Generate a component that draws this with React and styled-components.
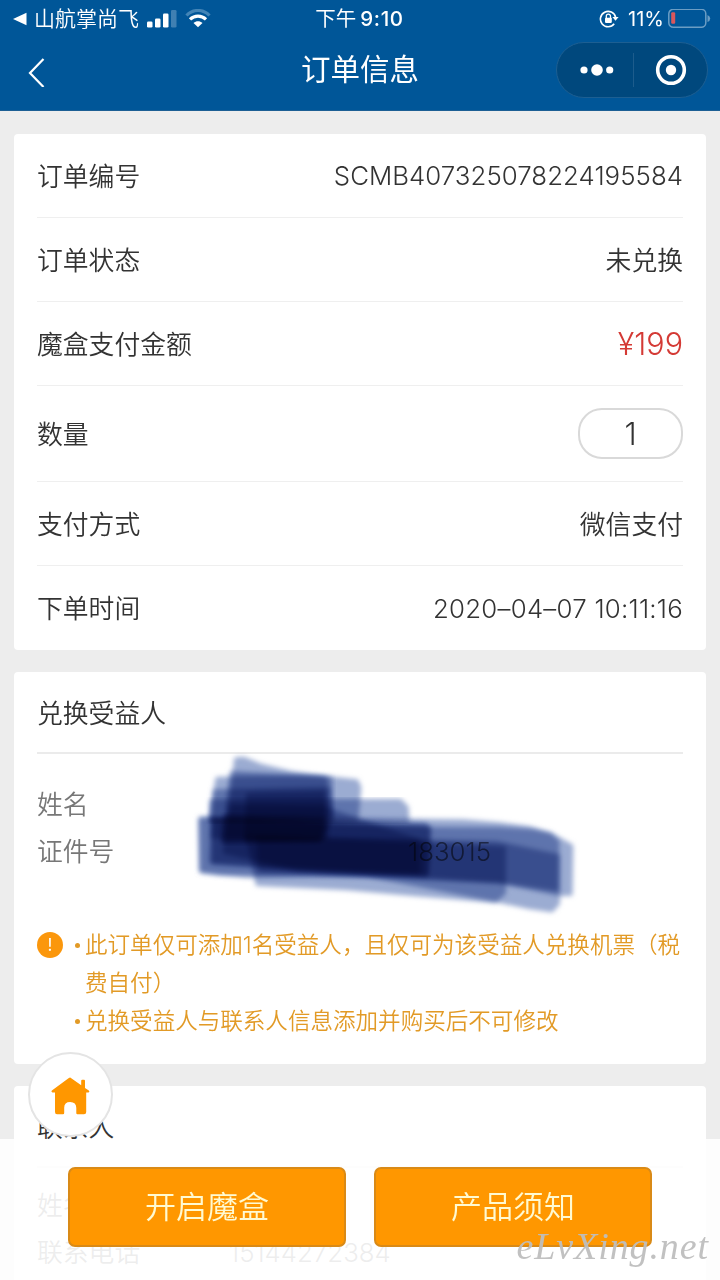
import React from 'react';
import styled, { createGlobalStyle } from 'styled-components';

const GlobalStyle = createGlobalStyle`
  * {
    box-sizing: border-box;
  }

  body {
    margin: 0;
    background: #ededed;
    font-family: Inter, 'Noto Sans CJK SC', sans-serif;
    font-weight: 350;
    color: #333;
  }
`;

const Screen = styled.div`
  position: relative;
  width: 720px;
  height: 1280px;
  overflow: hidden;
  background: #ededed;
`;

const Header = styled.header`
  height: 111px;
  background: #005698;
  border-bottom: 1px solid #1c5f94;
  color: #fff;
`;

const StatusBar = styled.div`
  display: grid;
  grid-template-columns: 1fr auto 1fr;
  align-items: center;
  height: 38px;
  padding: 0 9px 0 13px;
  font-size: 21px;
  line-height: 38px;
`;

const StatusGroup = styled.div`
  display: flex;
  align-items: center;
  justify-content: ${({ $end }) => ($end ? 'flex-end' : 'flex-start')};
  white-space: nowrap;
`;

const Carrier = styled.span`
  margin: 0 8px 0 7px;
`;

const Clock = styled.span`
  display: flex;
  align-items: center;
  gap: 4px;
  margin-right: 5px;
  font-size: 20.5px;
  font-weight: 400;
`;

const Time = styled.span`
  font-weight: 500;
  letter-spacing: 0.6px;
`;

const Percent = styled.span`
  margin: 0 4px 0 9px;
  font-size: 20px;
  font-weight: 400;
  letter-spacing: 0;
`;

const Signal = styled.svg`
  margin-right: 8px;
`;

const NavBar = styled.div`
  display: grid;
  grid-template-columns: 1fr auto 1fr;
  align-items: center;
  height: 65px;
  padding: 0 12px 0 27px;
`;

const Title = styled.h1`
  margin: 0 15px 0 0;
  padding-bottom: 3px;
  font-size: 29.5px;
  font-weight: 400;
  line-height: 61px;
`;

const Capsule = styled.div`
  display: flex;
  align-items: center;
  justify-self: end;
  width: 152px;
  height: 56px;
  margin-top: -1px;
  border: 1px solid #1d5f92;
  border-radius: 28px;
  background: #00487d;
`;

const CapsuleButton = styled.div`
  display: flex;
  flex: 1;
  align-items: center;
  justify-content: center;
  height: 34px;
  padding-left: 3px;

  & + & {
    padding-left: 0;
    border-left: 1px solid #1d5c8c;
  }
`;

const Content = styled.main`
  display: flex;
  flex-direction: column;
  gap: 22px;
  padding: 23px 14px 0;
`;

const Card = styled.section`
  position: relative;
  padding: 0 23px ${({ $bottom }) => $bottom || 0}px;
  border-radius: 4px;
  background: #fff;
`;

const Row = styled.div`
  display: flex;
  align-items: center;
  justify-content: space-between;
  height: ${({ $tall }) => ($tall ? 96 : 84)}px;
  border-bottom: 1px solid #efefef;
  font-size: 25.8px;

  &:last-child {
    border-bottom: 0;
  }
`;

const Label = styled.span`
  padding-bottom: 3px;
`;

const Value = styled.span`
  padding-bottom: ${({ $tracking }) => ($tracking ? 0 : 3)}px;
  letter-spacing: ${({ $tracking }) => $tracking || 0}px;
`;

const Price = styled.span`
  color: #d43a35;
  font-size: 30.5px;
  letter-spacing: 0;
`;

const Quantity = styled.div`
  width: 105px;
  height: 51px;
  border: 2px solid #d9d9d9;
  border-radius: 24px;
  font-size: 31px;
  line-height: 48px;
  text-align: center;
`;

const CardTitle = styled.h2`
  height: 82px;
  margin: 0;
  border-bottom: 2px solid #ebebeb;
  font-size: 25.8px;
  font-weight: 350;
  line-height: 84px;
`;

const Fields = styled.dl`
  display: grid;
  grid-template-columns: 192px 1fr;
  margin: 0;
  padding-top: ${({ $top }) => $top}px;
  color: #777;
  font-size: 25.8px;
  line-height: 47px;
`;

const FieldName = styled.dt`
  height: 47px;
`;

const FieldValue = styled.dd`
  height: 47px;
  margin: 0;
  padding-left: ${({ $indent }) => $indent || 0}px;
`;

const Scribble = styled.svg`
  position: absolute;
  top: 68px;
  left: 166px;

  polygon {
    fill: #9bacd2;
    stroke: #9bacd2;
    stroke-width: 12px;
    stroke-linejoin: round;
    mix-blend-mode: multiply;
  }
`;

const Notice = styled.div`
  display: flex;
  padding-top: 51px;
  color: #e29a26;
`;

const NoticeBadge = styled.div`
  flex: none;
  width: 26px;
  height: 26px;
  margin: 6px 11px 0 0;
  border-radius: 50%;
  background: #fb970c;
  color: #fff;
  font-size: 17px;
  font-weight: 400;
  line-height: 26px;
  text-align: center;
`;

const NoticeList = styled.ul`
  flex: 1;
  margin: 0 -4px 0 0;
  padding: 0;
  list-style: none;
`;

const NoticeItem = styled.li`
  display: flex;
  font-size: 22.55px;
  line-height: 38px;
  white-space: pre-line;

  &::before {
    content: '';
    flex: none;
    width: 5px;
    height: 5px;
    margin: 17px 5px 0 1px;
    border-radius: 50%;
    background: #e29a26;
  }
`;

const HomeButton = styled.div`
  position: absolute;
  top: 1052px;
  left: 28px;
  display: flex;
  align-items: center;
  justify-content: center;
  width: 85px;
  height: 85px;
  padding-top: 3px;
  border: 2px solid #e4e4e4;
  border-radius: 50%;
  background: #fff;
`;

const Footer = styled.footer`
  position: absolute;
  bottom: 0;
  left: 0;
  display: flex;
  gap: 28px;
  width: 100%;
  height: 141px;
  padding: 28px 68px 0;
  background: rgba(255, 255, 255, 0.87);
`;

const ActionButton = styled.button`
  flex: 1;
  height: 80px;
  padding: 0 0 5px;
  border: 2px solid #d98a17;
  border-radius: 7px;
  background: #ff9700;
  color: #fffad2;
  font: inherit;
  font-size: 31px;
`;

const Watermark = styled.div`
  position: absolute;
  right: 11px;
  bottom: 12px;
  color: rgba(190, 190, 190, 0.95);
  font: italic 38px/44px 'Z003', 'URW Chancery L', 'Liberation Serif', serif;
  letter-spacing: 0.9px;
`;

const orderRows = [
  { label: '订单编号', value: 'SCMB407325078224195584', tracking: 0.05 },
  { label: '订单状态', value: '未兑换' },
  { label: '魔盒支付金额', price: '¥199' },
  { label: '数量', quantity: 1 },
  { label: '支付方式', value: '微信支付' },
  { label: '下单时间', value: '2020–04–07 10:11:16', tracking: 0.25 },
];

const notices = [
  '此订单仅可添加1名受益人，且仅可为该受益人兑换机票（税\n费自付）',
  '兑换受益人与联系人信息添加并购买后不可修改',
];

// overlapping translucent marker strokes
const strokes = [
  '168,58 190,56 240,76 330,98 452,116 452,232 148,235',
  '112,116 420,112 530,124 538,142 530,236 92,240',
  '104,154 446,146 454,240 410,300 98,290',
  '155,98 436,116 441,290 130,300',
  '94,184 660,182 680,202 682,242 94,242',
  '64,236 700,242 850,244 960,253 1050,265 1110,283 1174,318 1172,462 1140,462 960,424 400,400 120,400 64,392',
  '60,238 735,254 746,270 740,400 520,403 200,407 64,392',
  '98,240 746,262 738,405 94,366',
  '216,344 232,432 500,445 700,462 945,482 972,458 972,324 200,290',
  '234,294 950,309 1134,348 1134,490 1115,511 1040,500 940,479 560,404 240,390',
  '104,248 740,266 960,268 1060,274 1110,284 1132,305 1130,448 960,424 100,366',
  '134,228 430,234 421,301 130,306',
  '204,164 430,160 430,296 200,296',
  '154,200 430,204 560,250 716,302 716,396 350,386 134,336',
];

function SignalIcon() {
  return (
    <Signal width="30" height="19" viewBox="0 0 30 19" fill="#fff">
      <rect x="0" y="11.5" width="5.5" height="6" rx="1.3" />
      <rect x="8" y="8.5" width="5.5" height="9" rx="1.3" />
      <rect x="16" y="3.5" width="5.5" height="14" rx="1.3" />
      <rect x="24" y="0" width="5.5" height="17.5" rx="1.3" opacity="0.25" />
    </Signal>
  );
}

function WifiIcon() {
  return (
    <svg width="26" height="20" viewBox="0 0 26 20" fill="none" strokeWidth="3.2">
      <path d="M1.5 6.5C8 -0.2 18 -.2 24.5 6.5" stroke="#4385b7" />
      <path d="M5 10.4C9.6 6 16.4 6 21 10.4" stroke="#fff" />
      <path d="M8.5 14C11.2 11.5 14.8 11.5 17.5 14L13 18.3Z" fill="#fff" />
    </svg>
  );
}

function RotationLockIcon() {
  return (
    <svg width="20" height="20" viewBox="0 0 20 20" fill="none" stroke="#fff" strokeWidth="1.6">
      <path d="M15.2 14.8A7.7 7.7 0 1 1 16.6 8.2" />
      <path d="M13.4 8H19.6L16.5 11.8Z" fill="#fff" stroke="none" />
      <rect x="6" y="8.7" width="6.8" height="5.2" rx="0.8" fill="#fff" stroke="none" />
      <path d="M7.3 9V7.3A2.1 2.1 0 0 1 11.5 7.3V9" strokeWidth="1.3" />
    </svg>
  );
}

function BatteryIcon() {
  return (
    <svg width="43" height="20" viewBox="0 0 43 20">
      <rect x="0.8" y="0.3" width="37" height="18" rx="4.5" fill="none" stroke="#6b9dc4" strokeWidth="1.5" />
      <rect x="3.2" y="3.2" width="4" height="11.5" rx="1.2" fill="#d9575c" />
      <path d="M39.5 6Q42.2 7 42.2 9.5T39.5 13Z" fill="#6b9dc4" />
    </svg>
  );
}

function HomeIcon() {
  return (
    <svg width="39" height="38" viewBox="0 0 39 38" fill="#ff9700">
      <path d="M19.2 .5 30.2 8.2V3.8Q30.2 2.8 31.2 2.8H33Q34 2.8 34 3.8V10.9L37.8 13.6Q39 14.8 37.5 15.6H35.2V35Q35.2 37.3 33 37.3H26.3Q25.3 37.3 25.3 36V31Q25.3 25 19.2 25T13.2 31V36Q13.2 37.3 12 37.3H6Q4 37.3 4 35V15.6H1.5Q-.2 15 .9 13.6L17.5 1.3Q18.4 .5 19.2 .5Z" />
    </svg>
  );
}

function TopBar() {
  return (
    <Header>
      <StatusBar>
        <StatusGroup>
          <svg width="14" height="14" viewBox="0 0 14 14">
            <path d="M0 7 13.5 .7V13.3Z" fill="#fff" />
          </svg>
          <Carrier>山航掌尚飞</Carrier>
          <SignalIcon />
          <WifiIcon />
        </StatusGroup>
        <Clock>
          下午
          <Time>9:10</Time>
        </Clock>
        <StatusGroup $end>
          <RotationLockIcon />
          <Percent>11%</Percent>
          <BatteryIcon />
        </StatusGroup>
      </StatusBar>
      <NavBar>
        <svg width="18" height="32" viewBox="0 0 18 32">
          <path d="M16.5 4 3 18 16.5 32" fill="none" stroke="#fff" strokeWidth="2.2" />
        </svg>
        <Title>订单信息</Title>
        <Capsule>
          <CapsuleButton>
            <svg width="34" height="12" viewBox="0 0 34 12" fill="#fff">
              <circle cx="4" cy="6" r="3.6" />
              <circle cx="17" cy="6" r="5.8" />
              <circle cx="29.7" cy="6" r="3.6" />
            </svg>
          </CapsuleButton>
          <CapsuleButton>
            <svg width="32" height="32" viewBox="0 0 32 32">
              <circle cx="16" cy="16" r="13.3" fill="none" stroke="#fff" strokeWidth="3.6" />
              <circle cx="16" cy="16" r="5.2" fill="#fff" />
            </svg>
          </CapsuleButton>
        </Capsule>
      </NavBar>
    </Header>
  );
}

function OrderRow({ row }) {
  return (
    <Row $tall={Boolean(row.quantity)}>
      <Label>{row.label}</Label>
      {row.value && <Value $tracking={row.tracking}>{row.value}</Value>}
      {row.price && <Price>{row.price}</Price>}
      {row.quantity && <Quantity>{row.quantity}</Quantity>}
    </Row>
  );
}

function App() {
  return (
    <Screen>
      <GlobalStyle />
      <TopBar />
      <Content>
        <Card>
          {orderRows.map((row) => <OrderRow key={row.label} row={row} />)}
        </Card>
        <Card $bottom={24}>
          <CardTitle>兑换受益人</CardTitle>
          <Fields $top={27}>
            <FieldName>姓名</FieldName>
            <FieldValue />
            <FieldName>证件号</FieldName>
            <FieldValue $indent={179}>183015</FieldValue>
          </Fields>
          <Scribble width="420" height="190" viewBox="0 0 1260 570">
            <defs>
              <filter id="soft" x="-5%" y="-15%" width="110%" height="130%">
                <feGaussianBlur stdDeviation="8" />
              </filter>
            </defs>
            {strokes.map((points) => <polygon key={points} points={points} filter="url(#soft)" />)}
          </Scribble>
          <Notice>
            <NoticeBadge>!</NoticeBadge>
            <NoticeList>
              {notices.map((text) => <NoticeItem key={text}>{text}</NoticeItem>)}
            </NoticeList>
          </Notice>
        </Card>
        <Card $bottom={40}>
          <CardTitle>联系人</CardTitle>
          <Fields $top={14}>
            <FieldName>姓名</FieldName>
            <FieldValue />
            <FieldName>联系电话</FieldName>
            <FieldValue>15144272384</FieldValue>
          </Fields>
        </Card>
      </Content>
      <HomeButton>
        <HomeIcon />
      </HomeButton>
      <Footer>
        <ActionButton>开启魔盒</ActionButton>
        <ActionButton>产品须知</ActionButton>
      </Footer>
      <Watermark>eLvXing.net</Watermark>
    </Screen>
  );
}

export default App;
